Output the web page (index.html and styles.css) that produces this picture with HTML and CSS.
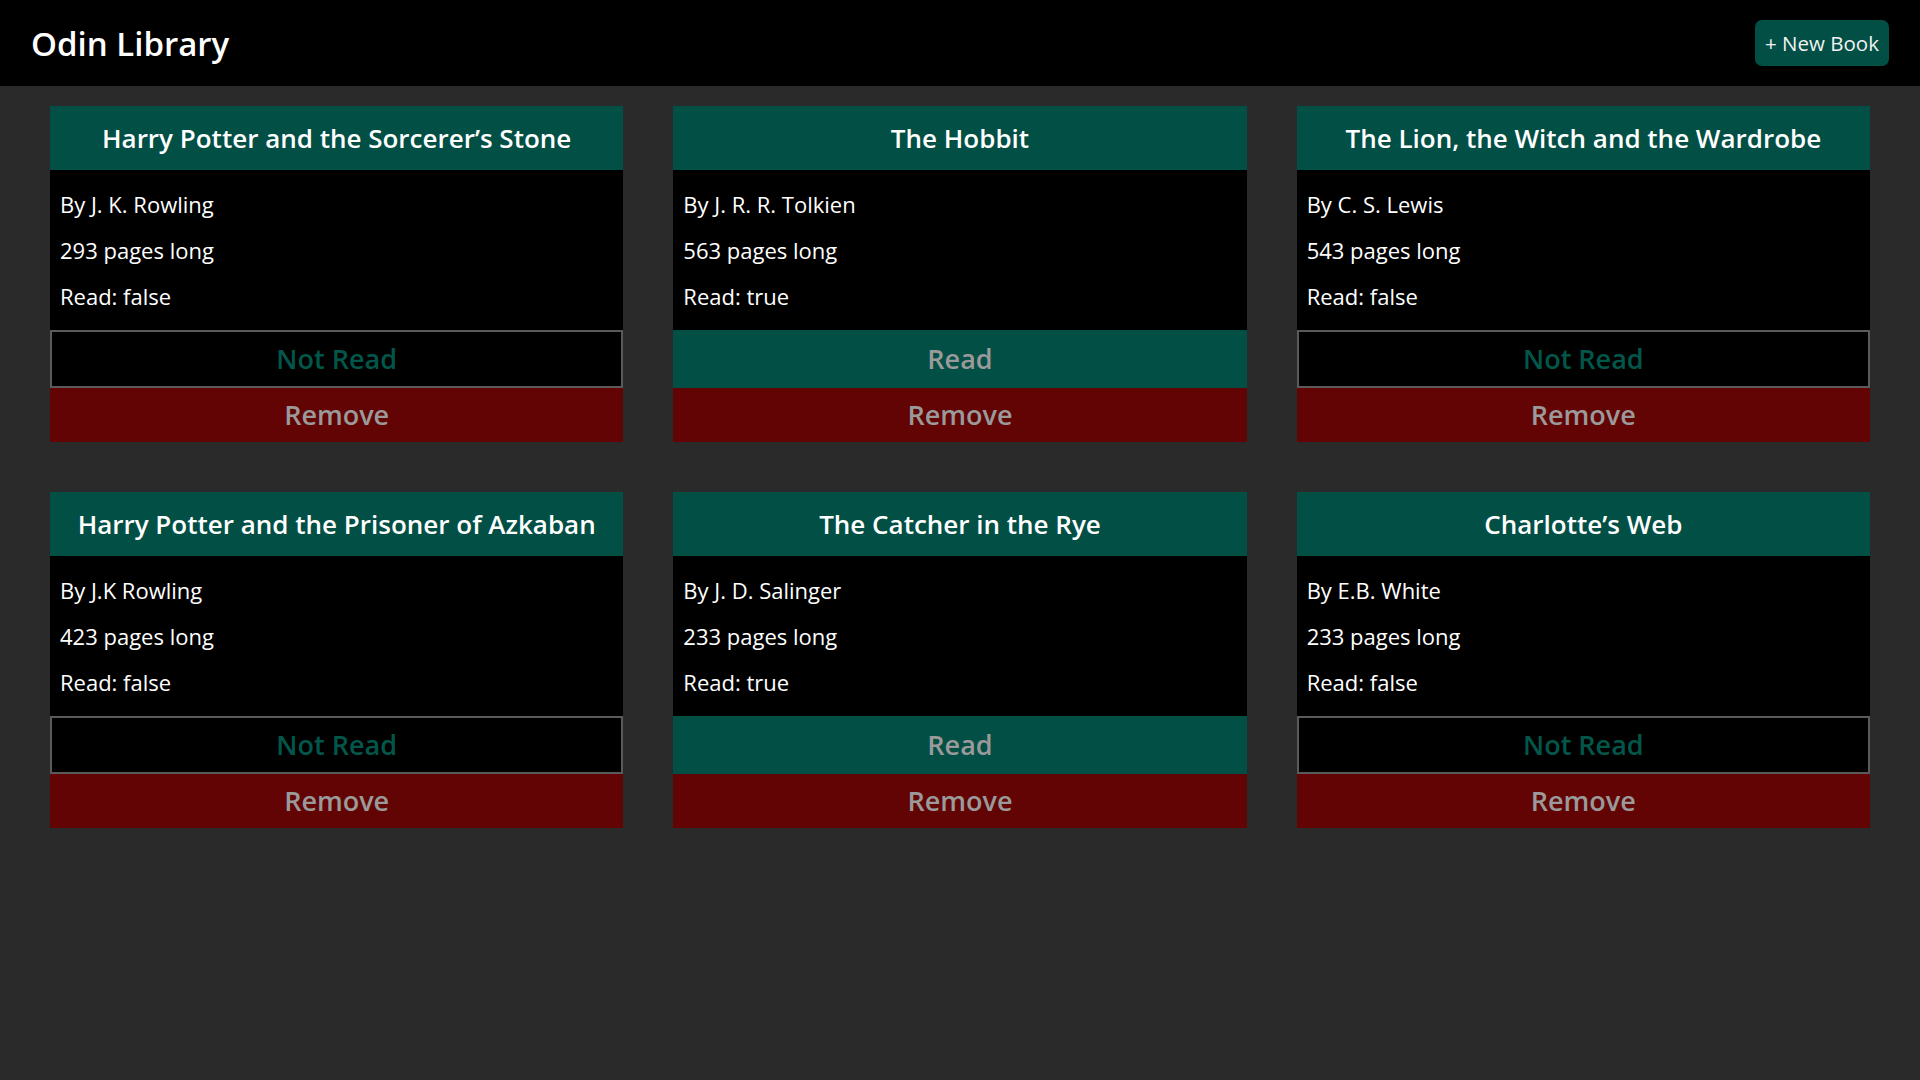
FILE: index.html
```html
<!DOCTYPE html>
<html lang="en">
<head>
<meta charset="utf-8">
<title>Odin Library</title>
<link rel="stylesheet" href="styles.css">
</head>
<body>
<header class="topbar">
  <h1 class="brand">Odin Library</h1>
  <button class="new-book">+ New Book</button>
</header>
<main class="library">
  <article class="card">
    <h2 class="card-title">Harry Potter and the Sorcerer’s Stone</h2>
    <div class="card-body">
      <p>By J. K. Rowling</p>
      <p>293 pages long</p>
      <p>Read: false</p>
    </div>
    <button class="btn btn-notread">Not Read</button>
    <button class="btn btn-remove">Remove</button>
  </article>
  <article class="card">
    <h2 class="card-title">The Hobbit</h2>
    <div class="card-body">
      <p>By J. R. R. Tolkien</p>
      <p>563 pages long</p>
      <p>Read: true</p>
    </div>
    <button class="btn btn-read">Read</button>
    <button class="btn btn-remove">Remove</button>
  </article>
  <article class="card">
    <h2 class="card-title">The Lion, the Witch and the Wardrobe</h2>
    <div class="card-body">
      <p>By C. S. Lewis</p>
      <p>543 pages long</p>
      <p>Read: false</p>
    </div>
    <button class="btn btn-notread">Not Read</button>
    <button class="btn btn-remove">Remove</button>
  </article>
  <article class="card">
    <h2 class="card-title">Harry Potter and the Prisoner of Azkaban</h2>
    <div class="card-body">
      <p>By J.K Rowling</p>
      <p>423 pages long</p>
      <p>Read: false</p>
    </div>
    <button class="btn btn-notread">Not Read</button>
    <button class="btn btn-remove">Remove</button>
  </article>
  <article class="card">
    <h2 class="card-title">The Catcher in the Rye</h2>
    <div class="card-body">
      <p>By J. D. Salinger</p>
      <p>233 pages long</p>
      <p>Read: true</p>
    </div>
    <button class="btn btn-read">Read</button>
    <button class="btn btn-remove">Remove</button>
  </article>
  <article class="card">
    <h2 class="card-title">Charlotte’s Web</h2>
    <div class="card-body">
      <p>By E.B. White</p>
      <p>233 pages long</p>
      <p>Read: false</p>
    </div>
    <button class="btn btn-notread">Not Read</button>
    <button class="btn btn-remove">Remove</button>
  </article>
</main>
</body>
</html>
```
FILE: styles.css
```css
* { box-sizing: border-box; }

html, body {
  margin: 0;
  padding: 0;
}

body {
  background: #2a2a2a;
  color: #fff;
  font-family: "Open Sans", "Lato", sans-serif;
  min-height: 1080px;
}

.topbar {
  height: 86px;
  background: #000;
  display: flex;
  align-items: center;
  justify-content: space-between;
  padding: 0 31px 0 31px;
}

.brand {
  margin: 0;
  font-size: 33px;
  font-weight: 600;
  color: #fff;
}

.new-book {
  width: 134px;
  height: 46px;
  border: none;
  border-radius: 7px;
  background: #024f45;
  color: #f2f2f2;
  font-family: inherit;
  font-size: 20.5px;
  padding: 0;
}

.library {
  display: grid;
  grid-template-columns: repeat(3, 1fr);
  column-gap: 50px;
  row-gap: 50px;
  padding: 20px 50px;
}

.card {
  display: flex;
  flex-direction: column;
  background: #000;
}

.card-title {
  margin: 0;
  height: 64px;
  display: flex;
  align-items: center;
  justify-content: center;
  background: #024f45;
  color: #fff;
  font-size: 26px;
  font-weight: 600;
}

.card-body {
  padding: 1px 10px;
}

.card-body p {
  margin: 20px 0;
  font-size: 22px;
  line-height: 26px;
  color: #fff;
}

.btn {
  display: block;
  width: 100%;
  font-family: inherit;
  font-size: 27px;
  font-weight: 600;
  line-height: 32px;
  border: none;
  margin: 0;
  padding: 0;
  text-align: center;
}

.btn-notread {
  background: #000;
  color: #02574b;
  border: 2px solid #5a5a5a;
  height: 58px;
}

.btn-read {
  background: #024f45;
  color: #9a9a9a;
  border: 2px solid #024f45;
  height: 58px;
}

.btn-remove {
  background: #630404;
  color: #9a9a9a;
  height: 54px;
}
```
